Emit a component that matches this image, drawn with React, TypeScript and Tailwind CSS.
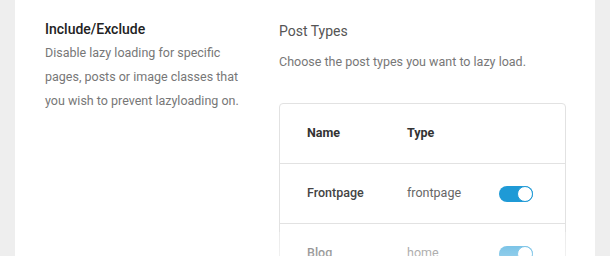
import React from 'react'

type Row = { name: string; type: string; on: boolean }

const rows: Row[] = [
  { name: 'Frontpage', type: 'frontpage', on: true },
  { name: 'Blog', type: 'home', on: true },
]

function Toggle({ on }: { on: boolean }) {
  return (
    <span
      className={`relative inline-flex h-4 w-[34px] items-center rounded-full ${on ? 'bg-[#1f9ad6]' : 'bg-[#cfcfcf]'}`}
    >
      <span
        className={`absolute top-0 h-4 w-4 rounded-full border border-[#1f9ad6] bg-white ${on ? 'right-0' : 'left-0'}`}
      />
    </span>
  )
}

export default function App() {
  return (
    <div className="h-[256px] w-[610px] overflow-hidden bg-[#eeeeee] pl-[15px] pr-[15px] font-['Roboto',sans-serif]">
      <div className="relative flex h-full bg-white">
        <div className="w-[264px] shrink-0 pl-[30px] pt-[19px]">
          <h3 className="text-[14px] font-medium leading-5 text-[#222]">Include/Exclude</h3>
          <p className="mt-[2px] w-[200px] text-[12.5px] leading-6 text-[#777]">
            Disable lazy loading for specific pages, posts or image classes that you wish to prevent lazyloading on.
          </p>
        </div>
        <div className="flex-1 pt-[21px]">
          <h3 className="text-[14px] leading-5 text-[#555]">Post Types</h3>
          <p className="mt-[11px] text-[12.5px] leading-5 text-[#777]">Choose the post types you want to lazy load.</p>
          <div className="mt-[31px] w-[287px] rounded border border-[#e2e2e2]">
            <div className="flex h-[60px] items-center border-b border-[#e2e2e2] pl-[27px] text-[12.5px] font-bold text-[#333]">
              <span className="w-[100px]">Name</span>
              <span>Type</span>
            </div>
            {rows.map((r) => (
              <div key={r.name} className="flex h-[60px] items-center border-b border-[#e2e2e2] pl-[27px] text-[12.5px]">
                <span className="w-[100px] font-medium text-[#444]">{r.name}</span>
                <span className="w-[92px] text-[#666]">{r.type}</span>
                <Toggle on={r.on} />
              </div>
            ))}
          </div>
        </div>
        <div className="pointer-events-none absolute bottom-0 left-0 right-0 h-[24px] bg-gradient-to-b from-white/30 to-white/50" />
      </div>
    </div>
  )
}
